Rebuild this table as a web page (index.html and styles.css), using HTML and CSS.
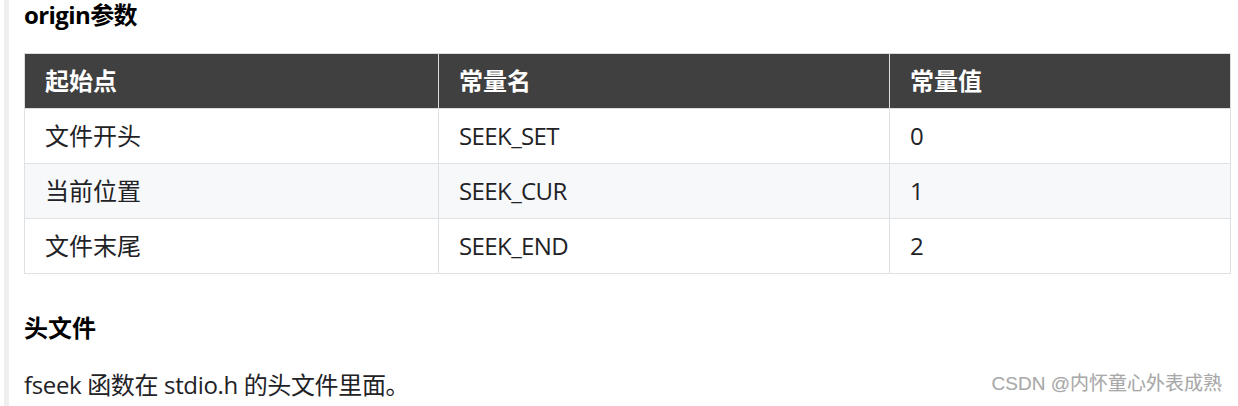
FILE: index.html
```html
<!DOCTYPE html>
<html lang="zh-CN">
<head>
<meta charset="utf-8">
<title>origin参数</title>
<link rel="stylesheet" href="styles.css">
</head>
<body>
<div class="page">
  <article class="content">
    <h4 class="heading first">origin参数</h4>
    <table class="data">
      <colgroup>
        <col class="c1"><col class="c2"><col class="c3">
      </colgroup>
      <thead>
        <tr><th>起始点</th><th>常量名</th><th>常量值</th></tr>
      </thead>
      <tbody>
        <tr><td>文件开头</td><td class="latin">SEEK_SET</td><td>0</td></tr>
        <tr class="alt"><td>当前位置</td><td class="latin">SEEK_CUR</td><td>1</td></tr>
        <tr><td>文件末尾</td><td class="latin">SEEK_END</td><td>2</td></tr>
      </tbody>
    </table>
    <h4 class="heading second">头文件</h4>
    <p class="text">fseek 函数在 stdio.h 的头文件里面。</p>
  </article>
  <div class="watermark">CSDN @内怀童心外表成熟</div>
</div>
</body>
</html>
```

FILE: styles.css
```css
html, body {
  margin: 0;
  padding: 0;
  background: #fff;
}

.page {
  position: relative;
  height: 406px;
  overflow: hidden;
  font-family: "Open Sans", "Noto Sans CJK SC", sans-serif;
  color: #222226;
}

.content {
  margin-left: 4px;
  border-left: 5px solid #efefef;
  padding-left: 15px;
  padding-right: 7px;
  padding-top: 1px;
  height: 100%;
  box-sizing: border-box;
}

.heading {
  margin: 0;
  font-size: 24px;
  line-height: 28px;
  font-weight: 700;
  color: #000;
}

.heading.first {
  margin-top: 0;
  letter-spacing: -0.6px;
}

.heading.second {
  margin-top: 40px;
}

.data {
  margin-top: 24px;
  width: 1206px;
  border-collapse: collapse;
  table-layout: fixed;
  font-size: 24px;
}

.data .c1 { width: 414px; }
.data .c2 { width: 451px; }
.data .c3 { width: 341px; }

.data th,
.data td {
  border: 1px solid #dfe2e5;
  padding: 12px 20px;
  line-height: 30px;
  text-align: left;
  white-space: nowrap;
}

.data th {
  background: #404040;
  color: #fff;
  font-weight: 700;
  border-color: #dddddd;
}

.data td {
  color: #222226;
}

.data td.latin {
  letter-spacing: -0.6px;
}

.data tr.alt td {
  background: #f6f8fa;
}

.text {
  margin: 28px 0 0;
  font-size: 24px;
  line-height: 30px;
  letter-spacing: -0.35px;
}

.watermark {
  position: absolute;
  right: 16px;
  top: 372px;
  font-family: "Liberation Sans", "Noto Sans CJK SC", sans-serif;
  font-size: 19px;
  line-height: 24px;
  color: #a8a8a8;
  text-shadow: 0 0 1px rgba(0,0,0,0.08);
}
```
